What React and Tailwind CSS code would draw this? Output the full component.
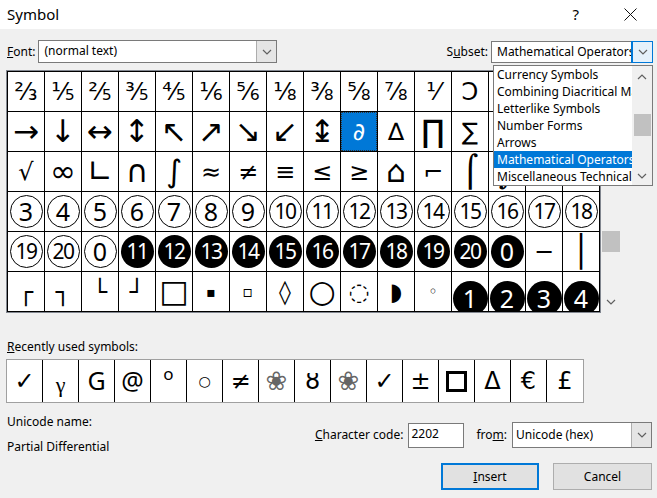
import React from 'react'

const sym = "font-['DejaVu_Sans',sans-serif]"

const row1 = ['⅔', '⅕', '⅖', '⅗', '⅘', '⅙', '⅚', '⅛', '⅜', '⅝', '⅞', '⅟', 'Ↄ', 'ↄ', '←', '↑']
const row2 = ['→', '↓', '↔', '↕', '↖', '↗', '↘', '↙', '↨', '∂', '∆', '∏', '∑', '−', '∕', '∙']
const row3 = ['√', '∞', '∟', '∩', '∫', '≈', '≠', '≡', '≤', '≥', '⌂', '⌐', '⌠', '⌡', '─', '│']
const row4 = ['3', '4', '5', '6', '7', '8', '9', '10', '11', '12', '13', '14', '15', '16', '17', '18']
const row5 = [
  { n: '19' }, { n: '20' }, { n: '0' },
  { n: '11', dark: true }, { n: '12', dark: true }, { n: '13', dark: true }, { n: '14', dark: true },
  { n: '15', dark: true }, { n: '16', dark: true }, { n: '17', dark: true }, { n: '18', dark: true },
  { n: '19', dark: true }, { n: '20', dark: true }, { n: '0', dark: true },
]
const row6 = ['┌', '┐', '└', '┘', '□', '▪', '▫', '◊', '○', '◌', '◗', '◦']

const big = ['→', '↓', '↔', '↕', '↖', '↗', '↘', '↙', '↨', '∞', '∟', '∩', '∫', '⌂', '⌠', '⌡', '∏', '□', '○']

const recent = ['✓', 'γ', 'G', '@', 'º', '◦', '≠', '❀', 'ȣ', '❀', '✔', '±', 'box', 'Δ', '€', '£']

function Chevron({ up = false, color = '#606060' }) {
  return (
    <svg width="10" height="6" viewBox="0 0 10 6">
      <path d={up ? 'M1 5L5 1L9 5' : 'M1 1L5 5L9 1'} fill="none" stroke={color} strokeWidth="1.2" />
    </svg>
  )
}

function Circle({ n, dark = false, big = false }) {
  const two = n.length > 1
  return (
    <div
      className={`flex items-center justify-center rounded-full shrink-0 font-['Noto_Sans',sans-serif] leading-none ${
        dark ? 'bg-black text-white' : 'border border-black bg-white text-black'
      } ${big ? 'w-[35px] h-[35px] translate-y-[7px]' : 'w-[33px] h-[33px]'} ${
        two ? 'text-[21px] tracking-[-1.5px]' : 'text-[25px]'
      }`}
    >
      {n}
    </div>
  )
}

function Cell({ children, selected = false, large = false }) {
  return (
    <div
      className={`h-[39px] flex items-center justify-center overflow-hidden ${sym} leading-none ${
        large ? 'text-[31px]' : 'text-[24px]'
      } ${
        selected ? 'bg-[#0078d7] text-white outline-1 outline-dotted outline-[#333] -outline-offset-1' : 'bg-white text-black'
      }`}
    >
      {children}
    </div>
  )
}

function Combo({ width, text, active = false }) {
  return (
    <div className={`flex h-[22px] bg-white border border-[#7a7a7a] ${width}`}>
      <div className="flex-1 pl-[5px] leading-[20px] whitespace-nowrap overflow-hidden">{text}</div>
      <div
        className={`w-[20px] flex items-center justify-center border-l ${
          active ? 'bg-[#e5f1fb] border-[#0078d7] outline outline-[#0078d7]' : 'bg-[#e5e5e5] border-[#adadad]'
        }`}
      >
        <Chevron />
      </div>
    </div>
  )
}

const subsets = [
  'Currency Symbols',
  'Combining Diacritical Marks for Symbols',
  'Letterlike Symbols',
  'Number Forms',
  'Arrows',
  'Mathematical Operators',
  'Miscellaneous Technical',
]

export default function App() {
  return (
    <div className="w-[657px] h-[498px] bg-[#f0f0f0] relative overflow-hidden font-['Noto_Sans',sans-serif] text-[12px] text-black">
      {/* Title bar */}
      <div className="h-[29px] bg-white flex items-center justify-between pl-[7px] pr-[20px]">
        <span className="text-[15px]">Symbol</span>
        <div className="flex items-center gap-[45px]">
          <span className="text-[15px]">?</span>
          <svg width="13" height="13" viewBox="0 0 13 13">
            <path d="M0.5 0.5L12.5 12.5M12.5 0.5L0.5 12.5" stroke="#111" strokeWidth="1" />
          </svg>
        </div>
      </div>

      {/* Font / Subset */}
      <div className="mt-[11px] h-[23px] flex items-center pl-[7px] pr-[4px]">
        <span className="mr-[3px]">
          <span className="underline">F</span>ont:
        </span>
        <Combo width="w-[239px] h-[23px]" text="(normal text)" />
        <span className="ml-auto mr-[3px]">
          S<span className="underline">u</span>bset:
        </span>
        <Combo width="w-[162px]" text="Mathematical Operators" active />
      </div>

      {/* Symbol grid */}
      <div className="mt-[7px] ml-[6px] flex">
        <div className="border border-[#828790] bg-white">
          <div className="grid grid-cols-[repeat(16,36px)] gap-px p-px bg-black">
            {row1.map((c, i) => (
              <Cell key={'a' + i}>{c}</Cell>
            ))}
            {row2.map((c, i) => (
              <Cell key={'b' + i} selected={c === '∂'} large={big.includes(c)}>
                {c}
              </Cell>
            ))}
            {row3.map((c, i) => (
              <Cell key={'c' + i} large={big.includes(c)}>
                {c}
              </Cell>
            ))}
            {row4.map((n, i) => (
              <Cell key={'d' + i}>
                <Circle n={n} />
              </Cell>
            ))}
            {row5.map((c, i) => (
              <Cell key={'e' + i}>
                <Circle n={c.n} dark={c.dark} />
              </Cell>
            ))}
            <Cell>─</Cell>
            <Cell large>│</Cell>
            {row6.map((c, i) => (
              <Cell key={'f' + i} large={big.includes(c)}>
                {c === '▪' ? <span className="text-[14px]">▪</span> : c === '▫' ? <span className="text-[16px]">▫</span> : c === '◦' ? <span className="text-[16px]">◦</span> : c}
              </Cell>
            ))}
            {['1', '2', '3', '4'].map((n) => (
              <Cell key={'g' + n}>
                <Circle n={n} dark big />
              </Cell>
            ))}
          </div>
        </div>
        <div className="w-[19px] h-[243px] flex flex-col items-center">
          <div className="mt-[161px] w-[18px] h-[21px] bg-[#c1c1c1]" />
          <div className="mt-auto mb-[8px]">
            <Chevron />
          </div>
        </div>
      </div>

      {/* Recently used */}
      <div className="mt-[26px] ml-[7px] leading-[16px]">
        <span className="underline">R</span>ecently used symbols:
      </div>
      <div className="mt-[4px] ml-[6px] w-fit border border-[#a0a0a0] bg-white flex divide-x divide-black">
        {recent.map((c, i) => (
          <div key={i} className="w-[36px] h-[42px] flex items-center justify-center">
            {c === 'box' ? (
              <div className="w-[21px] h-[21px] border-[3px] border-black" />
            ) : c === 'γ' ? (
              <span className="font-['Liberation_Serif',serif] text-[22px] mt-[6px]">γ</span>
            ) : c === 'G' || c === '@' ? (
              <span className="font-['Noto_Sans',sans-serif] text-[25px]">{c}</span>
            ) : c === 'º' ? (
              <span className="font-['Noto_Sans',sans-serif] text-[17px] -mt-[14px]">o</span>
            ) : c === '◦' ? (
              <span className={`${sym} text-[14px]`}>○</span>
            ) : c === '❀' ? (
              <span className={`${sym} text-[26px] text-[#666]`}>❀</span>
            ) : c === '✓' || c === '✔' ? (
              <span className={`${sym} text-[24px] font-bold`}>✓</span>
            ) : (
              <span className={`${sym} text-[24px]`}>{c}</span>
            )}
          </div>
        ))}
      </div>

      {/* Bottom */}
      <div className="flex justify-between pl-[7px] pr-[5px]">
        <div className="pt-[11px] leading-[16px]">
          <div>Unicode name:</div>
          <div className="mt-[9px]">Partial Differential</div>
        </div>
        <div className="pt-[19px] flex flex-col items-end">
          <div className="flex items-center h-[26px]">
            <span className="mr-[5px]">
              <span className="underline">C</span>haracter code:
            </span>
            <div className="w-[56px] h-[25px] bg-white border border-[#7a7a7a] px-[2px] leading-[20px]">2202</div>
            <span className="ml-[12px] mr-[5px]">
              fro<span className="underline">m</span>:
            </span>
            <div className="flex w-[140px] h-[26px] bg-white border border-[#7a7a7a]">
              <div className="flex-1 px-[3px] leading-[24px]">Unicode (hex)</div>
              <div className="w-[20px] flex items-center justify-center bg-[#e5e5e5] border-l border-[#adadad]">
                <Chevron />
              </div>
            </div>
          </div>
          <div className="mt-[15px] flex gap-[14px]">
            <button className="w-[98px] h-[27px] bg-[#e1e1e1] border-2 border-[#0078d7]">
              <span className="underline">I</span>nsert
            </button>
            <button className="w-[99px] h-[27px] bg-[#e1e1e1] border border-[#adadad]">Cancel</button>
          </div>
        </div>
      </div>

      {/* Subset dropdown list */}
      <div className="absolute left-[493px] top-[65px] w-[160px] h-[121px] bg-white border border-[#7a7a7a] flex">
        <div className="flex-1 overflow-hidden">
          {subsets.map((s) => (
            <div
              key={s}
              className={`h-[17px] leading-[17px] px-[3px] whitespace-nowrap overflow-hidden ${
                s === 'Mathematical Operators' ? 'bg-[#0078d7] text-white' : ''
              }`}
            >
              {s}
            </div>
          ))}
        </div>
        <div className="w-[20px] bg-[#f0f0f0] flex flex-col items-center">
          <div className="mt-[8px]">
            <Chevron up />
          </div>
          <div className="mt-[34px] w-[17px] h-[22px] bg-[#c1c1c1]" />
          <div className="mt-auto mb-[6px]">
            <Chevron />
          </div>
        </div>
      </div>
    </div>
  )
}
